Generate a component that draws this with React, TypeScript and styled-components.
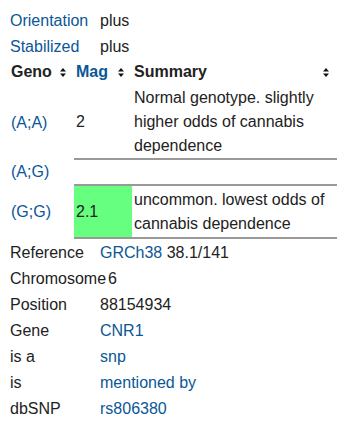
import React from "react";
import styled, { createGlobalStyle } from "styled-components";

const Global = createGlobalStyle`
  body {
    margin: 8px;
    font-family: "Liberation Sans", Arial, sans-serif;
    font-size: 16px;
    line-height: 24px;
    color: #222;
    background: #fff;
  }
`;

const LINK = "#0b5796";

const Page = styled.div`
  display: flex;
  flex-direction: column;
`;

const InfoRow = styled.div<{ $gap?: number }>`
  display: flex;
  align-items: baseline;
  margin-top: ${(p) => p.$gap ?? 0}px;
`;

const Label = styled.div<{ $link?: boolean }>`
  box-sizing: border-box;
  min-width: 92px;
  padding: 1px 2px;
  white-space: nowrap;
  color: ${(p) => (p.$link ? LINK : "#222")};
`;

const Value = styled.div`
  padding: 1px 0;
  white-space: nowrap;
`;

const A = styled.a`
  color: ${LINK};
  text-decoration: none;
`;

const Table = styled.table`
  width: 100%;
  border-collapse: collapse;
  border-spacing: 0;
  table-layout: fixed;
`;

const Th = styled.th<{ $w?: number; $link?: boolean; $pl?: number }>`
  width: ${(p) => (p.$w ? `${p.$w}px` : "auto")};
  padding: 0 0 2px ${(p) => p.$pl ?? 2}px;
  text-align: left;
  font-weight: bold;
  color: ${(p) => (p.$link ? LINK : "#222")};
`;

const HeadInner = styled.div`
  display: flex;
  align-items: center;
  justify-content: space-between;
  padding-right: 8px;
`;

const RowHead = styled.th`
  padding: 0 0 0 3px;
  text-align: left;
  font-weight: normal;
  vertical-align: middle;
  color: ${LINK};
`;

const Td = styled.td<{ $bg?: string; $h?: number }>`
  padding: 0 1px 0 2px;
  vertical-align: middle;
  border-bottom: 2px solid #999;
  background: ${(p) => p.$bg ?? "transparent"};
  height: ${(p) => (p.$h ? `${p.$h}px` : "auto")};
`;

const SortIcon = () => (
  <svg width="6" height="9" viewBox="0 0 6 9" aria-hidden="true">
    <path d="M3 0 L6 3.5 H0 Z" fill="#111" />
    <path d="M0 5.5 H6 L3 9 Z" fill="#111" />
  </svg>
);

const Head = ({ children }: { children: React.ReactNode }) => (
  <HeadInner>
    <span>{children}</span>
    <SortIcon />
  </HeadInner>
);

export default function App() {
  return (
    <Page>
      <Global />
      <InfoRow>
        <Label $link>Orientation</Label>
        <Value>plus</Value>
      </InfoRow>
      <InfoRow>
        <Label $link>Stabilized</Label>
        <Value>plus</Value>
      </InfoRow>
      <Table>
        <thead>
          <tr>
            <Th $w={63} $pl={3}>
              <Head>Geno</Head>
            </Th>
            <Th $w={56} $link>
              <Head>Mag</Head>
            </Th>
            <Th>
              <Head>Summary</Head>
            </Th>
          </tr>
        </thead>
        <tbody>
          <tr>
            <RowHead>(A;A)</RowHead>
            <Td>2</Td>
            <Td>Normal genotype. slightly higher odds of cannabis dependence</Td>
          </tr>
          <tr>
            <RowHead>(A;G)</RowHead>
            <Td></Td>
            <Td>&nbsp;</Td>
          </tr>
          <tr>
            <RowHead>(G;G)</RowHead>
            <Td $bg="#66ff80" $h={51}>
              2.1
            </Td>
            <Td>uncommon. lowest odds of cannabis dependence</Td>
          </tr>
        </tbody>
      </Table>
      <InfoRow $gap={1}>
        <Label>Reference</Label>
        <Value>
          <A href="#">GRCh38</A> 38.1/141
        </Value>
      </InfoRow>
      <InfoRow>
        <Label>Chromosome</Label>
        <Value>6</Value>
      </InfoRow>
      <InfoRow>
        <Label>Position</Label>
        <Value>88154934</Value>
      </InfoRow>
      <InfoRow>
        <Label>Gene</Label>
        <Value>
          <A href="#">CNR1</A>
        </Value>
      </InfoRow>
      <InfoRow>
        <Label>is a</Label>
        <Value>
          <A href="#">snp</A>
        </Value>
      </InfoRow>
      <InfoRow>
        <Label>is</Label>
        <Value>
          <A href="#">mentioned by</A>
        </Value>
      </InfoRow>
      <InfoRow>
        <Label>dbSNP</Label>
        <Value>
          <A href="#">rs806380</A>
        </Value>
      </InfoRow>
    </Page>
  );
}
